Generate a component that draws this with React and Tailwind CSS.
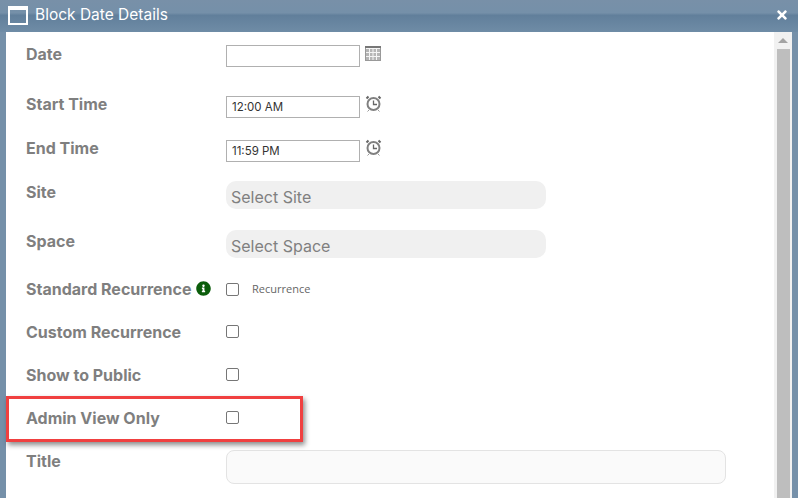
import { FaInfoCircle, FaTimes } from 'react-icons/fa';

const labelClass = "font-['Inter',sans-serif] text-[16px] font-bold leading-5 text-[#7f7f7f]";

function CalendarIcon() {
  return (
    <svg width="16" height="16" viewBox="0 0 16 16" className="ml-[5px] mt-[1px]" fill="none">
      <rect x="0.5" y="0.5" width="15" height="14" fill="#f6f6f6" stroke="#999" />
      <rect x="0" y="0" width="16" height="2" fill="#777" />
      <rect x="1" y="3" width="14" height="11" fill="#b5b5b5" />
      <path d="M4.5 3v11M8 3v11M11.5 3v11M1 6.5h14M1 10.5h14" stroke="#f4f4f4" strokeWidth="1" />
    </svg>
  );
}

function ClockIcon() {
  return (
    <svg width="17" height="17" viewBox="0 0 17 17" className="ml-[5px] -mt-[1px]" fill="none">
      <circle cx="8.5" cy="9" r="6" fill="#fff" stroke="#808080" strokeWidth="2" />
      <path d="M8.5 5.5V9.5H12" stroke="#666" strokeWidth="1.3" />
      <path d="M1.5 3.5 3.5 1.5M15.5 3.5 13.5 1.5" stroke="#666" strokeWidth="2" />
      <path d="M4 15l-1.5 1.5M13 15l1.5 1.5" stroke="#999" strokeWidth="1" />
    </svg>
  );
}

function TextBox({ value, icon }) {
  return (
    <div className="flex items-start">
      <div className="flex h-[22px] w-[134px] items-center border border-[#b0b0b0] pl-[5px] pt-[1px] font-['Inter',sans-serif] text-[11.5px] text-[#333]">
        {value}
      </div>
      {icon}
    </div>
  );
}

function SelectBox({ text }) {
  return (
    <div className="flex h-[28px] w-[320px] items-center rounded-[10px] bg-[#f0f0f0] pl-[5px] pt-[4px] font-['Inter',sans-serif] text-[16px] text-[#808080]">
      {text}
    </div>
  );
}

function CheckBox({ raised }) {
  return <div className={`h-[13px] w-[13px] rounded-[2px] border border-[#767676] bg-white ${raised ? 'mb-[2px]' : ''}`} />;
}

function CheckRow({ label, info, extra }) {
  return (
    <div className="flex h-[43px] items-center">
      <div className={`mb-[2px] flex w-[220px] items-center pl-[20px] ${labelClass}`}>
        {label}
        {info && <FaInfoCircle className="ml-[5px] text-[15px] text-[#0b5d0b]" />}
      </div>
      <CheckBox raised={!info} />
      {extra && <span className="ml-[13px] font-['Open_Sans',sans-serif] text-[11px] text-[#666]">{extra}</span>}
    </div>
  );
}

export default function App() {
  return (
    <div className="relative flex h-[498px] w-[798px] flex-col overflow-hidden bg-[#7590a9]">
      {/* title bar */}
      <div className="flex h-[32px] shrink-0 items-center bg-[linear-gradient(#7890a8_0%,#7590a9_40%,#617f9b_48%,#6f8ca6_100%)] pb-[2px] pl-[8px] pr-[9px]">
        <div className="h-[19px] w-[20px] border-2 border-t-[4px] border-white" />
        <span className="ml-[7px] font-['Inter',sans-serif] text-[15.5px] text-white">Block Date Details</span>
        <FaTimes className="ml-auto text-[14px] text-white" />
      </div>

      {/* dialog body */}
      <div className="mx-[6px] flex min-h-0 flex-1 overflow-hidden bg-white">
        <div className="flex-1 pt-[13px]">
          <div className="flex h-[51px]">
            <div className={`-mt-[1px] w-[220px] pl-[20px] ${labelClass}`}>Date</div>
            <TextBox icon={<CalendarIcon />} />
          </div>
          <div className="flex h-[44px]">
            <div className={`-mt-[2px] w-[220px] pl-[20px] ${labelClass}`}>Start Time</div>
            <TextBox value="12:00 AM" icon={<ClockIcon />} />
          </div>
          <div className="flex h-[41px]">
            <div className={`-mt-[2px] w-[220px] pl-[20px] ${labelClass}`}>End Time</div>
            <TextBox value="11:59 PM" icon={<ClockIcon />} />
          </div>
          <div className="flex h-[49px]">
            <div className={`mt-[1px] w-[220px] pl-[20px] ${labelClass}`}>Site</div>
            <SelectBox text="Select Site" />
          </div>
          <div className="flex h-[38px]">
            <div className={`mt-[1px] w-[220px] pl-[20px] ${labelClass}`}>Space</div>
            <SelectBox text="Select Space" />
          </div>
          <CheckRow label="Standard Recurrence" info extra="Recurrence" />
          <CheckRow label="Custom Recurrence" />
          <CheckRow label="Show to Public" />
          <CheckRow label="Admin View Only" />
          <div className="flex">
            <div className={`mt-[11px] w-[220px] pl-[20px] ${labelClass}`}>Title</div>
            <div className="mt-[10px] h-[34px] w-[500px] rounded-[8px] border border-[#e3e3e3] bg-[#fafafa]" />
          </div>
        </div>

        {/* scrollbar */}
        <div className="flex w-[18px] shrink-0 flex-col items-center bg-[#f1f1f1]">
          <div className="mt-[6px] h-0 w-0 border-x-[5px] border-b-[5px] border-x-transparent border-b-[#a3a3a3]" />
          <div className="mt-[6px] w-[13px] flex-1 bg-[#bebebe]" />
        </div>
      </div>

      {/* red annotation box */}
      <div className="absolute left-[6px] top-[396px] h-[46px] w-[297px] border-[3px] border-[#f04040] shadow-[2px_3px_5px_rgba(0,0,0,0.45)]" />
    </div>
  );
}
